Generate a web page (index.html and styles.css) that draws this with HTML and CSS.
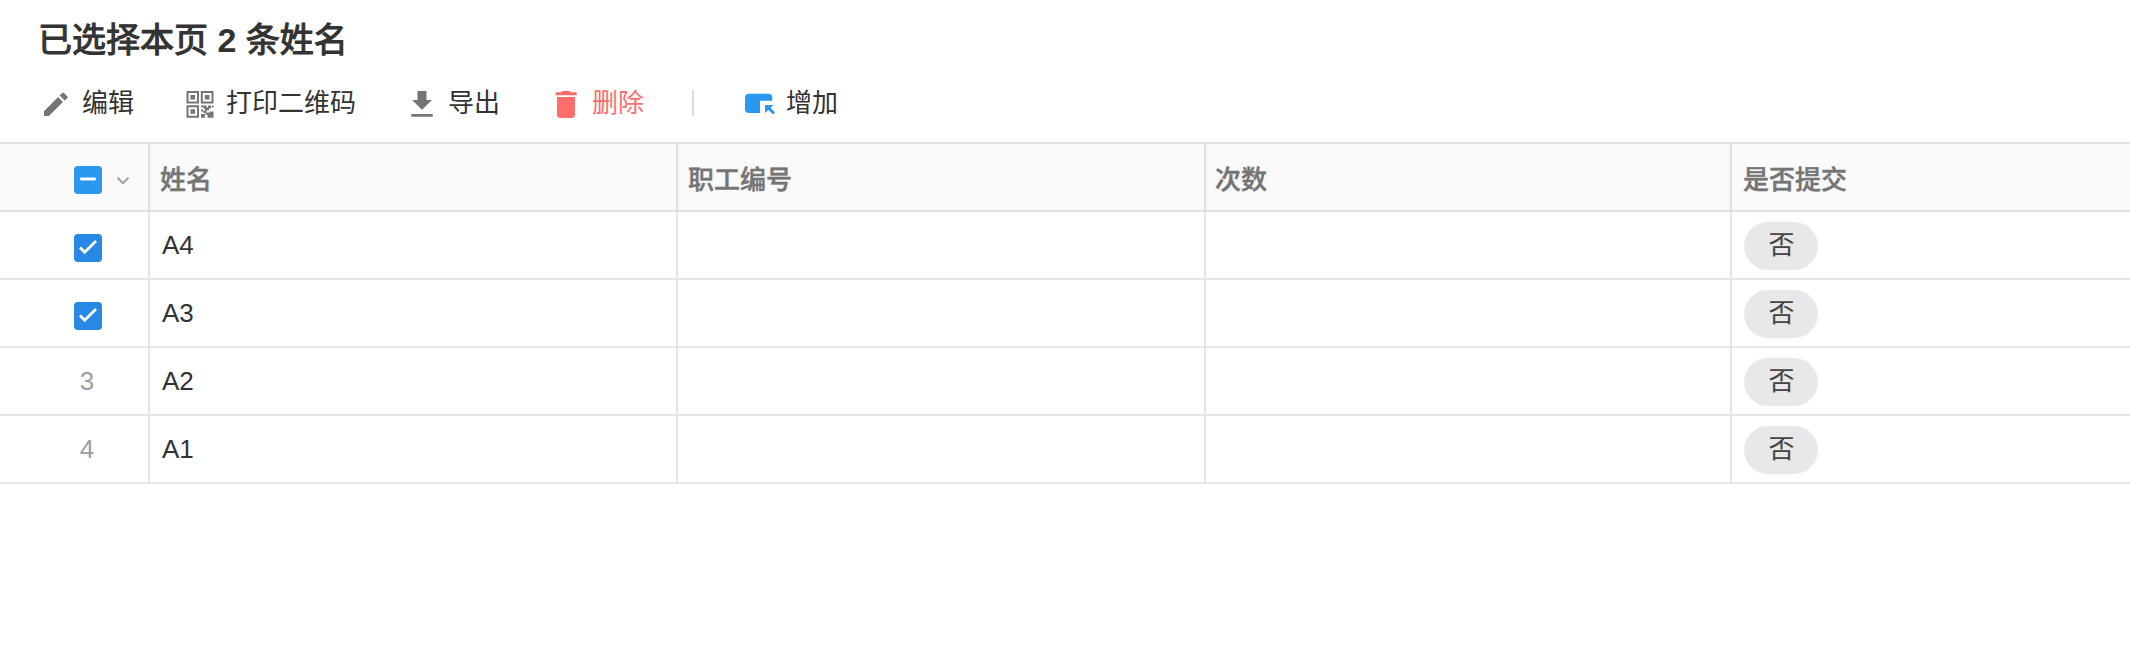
FILE: index.html
```html
<!DOCTYPE html>
<html lang="zh-CN">
<head>
<meta charset="utf-8">
<title>姓名</title>
<link rel="stylesheet" href="styles.css">
</head>
<body>
<header class="head">
  <h1 class="title">已选择本页 <span class="count">2</span> 条姓名</h1>
  <div class="toolbar">
    <button class="tool edit"><svg class="icon" width="28" height="28" viewBox="0 0 28 28"><path d="M2 21.2 16.1 7.1 21 12 6.9 26H2zM17.6 5.6 20.2 3q.9-.8 1.8 0l3.4 3.4q.8.9 0 1.8L22.6 10.600z"/></svg><span>编辑</span></button>
    <button class="tool qr"><svg class="icon" width="28" height="28" viewBox="0 0 28 28"><path fill-rule="evenodd" d="M.5 1h12.500v12.500H.5zM2.500 3v8.500h8.500V3zM14.800 1h12.700v12.500H14.800zM16.800 3v8.500h8.700V3zM.5 15.200h12.500v12.500H.5zM2.500 17.200v8.500h8.500V17.200z"/><path d="M4.400 5h4.700v4.500H4.400zM18.800 5h4.700v4.500h-4.700zM4.400 19.200h4.700v4.500H4.400zM15 15.500h5.500v2h1.500v-2h3v3h-2v2h-2.500v2h3.500v-1h3.500v6.200h-6v-3h-2v-2H17v-2h2v-2h-1.500v-1.500H15zM25.800 15.500h1.700v2h-1.700zM15 19.500h2v2h-2zM15 24h4v3.700h-4z"/></svg><span>打印二维码</span></button>
    <button class="tool export"><svg class="icon" width="28" height="28" viewBox="0 0 28 28"><path d="M9.500 1h9v9h5.500L14 19.800 4 10h5.500zM3.300 24h21.400v2.800H3.300z"/></svg><span>导出</span></button>
    <button class="tool remove"><svg class="icon" width="28" height="28" viewBox="0 0 28 28"><path d="M3.500 2.300H9L10.500 1h7L19 2.300h5.700v3H3.500zM5 7h18v17.500q0 3.500-3.500 3.500h-11Q5 28 5 24.500z"/></svg><span>删除</span></button>
    <i class="divider"></i>
    <button class="tool add"><svg class="icon" width="32" height="28" viewBox="0 0 32 28"><path d="M5 3.700h19.300q4 0 4 4v3H16v12.200H5q-4 0-4-4V7.700q0-4 4-4z"/><path d="M21 15h8.300l-2.700 2.700 4.400 4.700-1.900 1.900-4.900-4.300L21 23z"/></svg><span>增加</span></button>
  </div>
</header>
<main class="grid">
  <div class="cell th pick"><span class="box partial"><svg width="28" height="28" viewBox="0 0 28 28"><path d="M7.300 13h13.400"/></svg></span><svg class="chevron" width="14" height="10" viewBox="0 0 14 10"><path d="m1.500 1.700 5.500 5.500 5.500-5.500"/></svg></div>
  <div class="cell th">姓名</div><div class="cell th">职工编号</div><div class="cell th">次数</div><div class="cell th">是否提交</div>

  <div class="cell pick"><span class="box"><svg width="28" height="28" viewBox="0 0 28 28"><path d="m6 13.500 4.700 4.700L22 7"/></svg></span></div>
  <div class="cell">A4</div><div class="cell"></div><div class="cell"></div><div class="cell"><span class="pill">否</span></div>

  <div class="cell pick"><span class="box"><svg width="28" height="28" viewBox="0 0 28 28"><path d="m6 13.500 4.700 4.700L22 7"/></svg></span></div>
  <div class="cell">A3</div><div class="cell"></div><div class="cell"></div><div class="cell"><span class="pill">否</span></div>

  <div class="cell pick"><span class="num">3</span></div>
  <div class="cell">A2</div><div class="cell"></div><div class="cell"></div><div class="cell"><span class="pill">否</span></div>

  <div class="cell pick"><span class="num">4</span></div>
  <div class="cell">A1</div><div class="cell"></div><div class="cell"></div><div class="cell"><span class="pill">否</span></div>
</main>
</body>
</html>
```
FILE: styles.css
```css
* { box-sizing: border-box; }
body {
  margin: 0;
  background: #fff;
  color: #333;
  font-family: "Liberation Sans", "Noto Sans CJK SC", sans-serif;
  font-size: 26px;
}
.head { height: 142px; padding: 15px 38px 0; }
.title {
  margin: 0;
  font-size: 34px;
  line-height: 50px;
  font-weight: 400;
  -webkit-text-stroke: 1.1px #333;
}
.count { font-weight: 700; -webkit-text-stroke: 0; }
.toolbar { display: flex; align-items: center; height: 40px; margin-top: 18px; }
.tool {
  display: flex;
  align-items: center;
  gap: 12px;
  padding: 0;
  border: 0;
  background: none;
  color: #333;
  font: inherit;
  line-height: 40px;
  white-space: nowrap;
}
.icon { display: block; fill: #757575; margin-top: 2px; }
.edit { margin-left: 4px; }
.qr { margin-left: 52px; }
.export { margin-left: 52px; }
.remove { margin-left: 52px; color: #ff6c6c; }
.remove .icon { fill: #ff6c6c; }
.divider { width: 2px; height: 26px; margin-left: 48px; background: #ddd; }
.add { margin-left: 50px; gap: 10px; }
.add .icon { fill: #2b98f0; }
.grid {
  display: grid;
  grid-template-columns: 150px 528px 528px 526px 1fr;
  grid-template-rows: 70px repeat(4, 68px);
}
.cell {
  display: flex;
  align-items: center;
  padding: 0 0 0 12px;
  border-right: 2px solid #e6e6e6;
  border-bottom: 2px solid #e6e6e6;
}
.cell:nth-child(5n) { border-right: 0; }
.th {
  padding-left: 10px;
  border-top: 2px solid #e0e0e0;
  border-color: #e0e0e0;
  background: #fafafa;
  color: #757575;
  font-weight: 500;
  -webkit-text-stroke: 0.45px #757575;
}
.th:nth-child(5) { padding-left: 11px; }
.th:nth-child(4) { padding-left: 9px; }
.pick { padding: 6px 0 0 74px; }
.box { width: 28px; height: 28px; border-radius: 4px; background: #2789e5; }
.box.partial { background: #2b98f0; }
.box svg { display: block; fill: none; stroke: #fff; stroke-width: 2.8; }
.partial path { stroke-linecap: round; }
.chevron { margin: 1px 0 0 14px; fill: none; stroke: #9e9e9e; stroke-width: 2; }
.num { width: 26px; margin-top: -6px; color: #9e9e9e; text-align: center; }
.pill {
  width: 74px;
  height: 48px;
  margin-top: 2px;
  padding-left: 1px;
  border-radius: 24px;
  background: #e8e8e8;
  color: #444;
  line-height: 46px;
  text-align: center;
}
```
